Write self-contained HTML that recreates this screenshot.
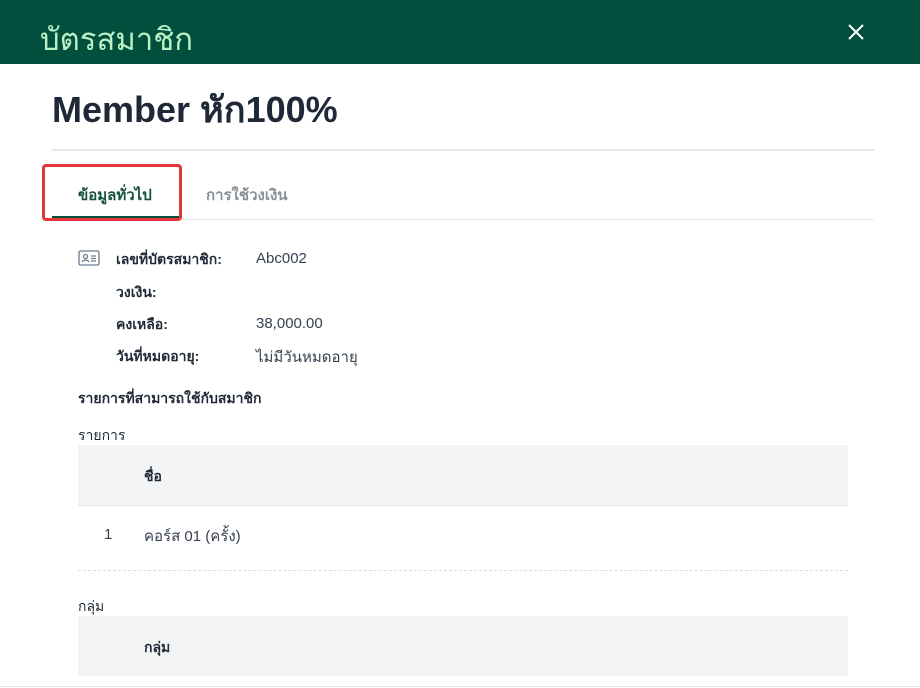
<!DOCTYPE html>
<html><head><meta charset="utf-8"><style>
body{margin:0;width:920px;height:688px;overflow:hidden;background:#fff;font-family:"Liberation Sans",sans-serif;color:#1f2937;position:relative}
.hdr{position:absolute;left:0;top:0;width:920px;height:64px;background:#024f3e}
.hdr .t{position:absolute;left:40px;top:14px;font-size:31px;color:#b9f0c4}
.hdr .x{position:absolute;left:846px;top:22px}
.a{position:absolute;white-space:nowrap}
h1{position:absolute;left:52px;top:81px;margin:0;font-size:36px;font-weight:700;color:#1e2836}
.line{position:absolute;height:1px;background:#e5e7eb}
.b{font-weight:700;font-size:14px;color:#1f2937}
.v{font-size:15px;color:#374151}
</style></head><body>
<div class="hdr"><div class="t">บัตรสมาชิก</div>
<svg class="x" width="20" height="20" viewBox="0 0 20 20"><path d="M3 3L17 17M17 3L3 17" stroke="#fff" stroke-width="2"/></svg></div>
<h1>Member หัก100%</h1>
<div class="line" style="left:52px;top:149px;width:822px;height:2px;background:#e5e7eb"></div>
<div class="line" style="left:52px;top:219px;width:822px"></div>
<div class="a" style="left:78px;top:183px;font-size:15px;font-weight:700;color:#14503f">ข้อมูลทั่วไป</div>
<div style="position:absolute;left:52px;top:216px;width:128px;height:3px;background:#024f3e"></div>
<div style="position:absolute;left:42px;top:164px;width:140px;height:57px;border:3px solid #e5373b;border-radius:4px;box-sizing:border-box"></div>
<div class="a" style="left:206px;top:183px;font-size:15px;font-weight:700;color:#8a9099">การใช้วงเงิน</div>
<svg style="position:absolute;left:78px;top:250px" width="22" height="16" viewBox="0 0 22 16"><rect x="1" y="1" width="20" height="14" rx="1.5" fill="none" stroke="#6b7a90" stroke-width="1.3"/><circle cx="7.5" cy="6.5" r="2" fill="none" stroke="#6b7a90" stroke-width="1.2"/><path d="M4 12c1-2.5 6-2.5 7 0M13 6h5M13 8.5h5M13 11h5" stroke="#6b7a90" stroke-width="1.2" fill="none"/></svg>
<div class="a b" style="left:116px;top:249px">เลขที่บัตรสมาชิก:</div><div class="a v" style="left:256px;top:250px">Abc002</div>
<div class="a b" style="left:116px;top:282px">วงเงิน:</div>
<div class="a b" style="left:116px;top:314px">คงเหลือ:</div><div class="a v" style="left:256px;top:315px">38,000.00</div>
<div class="a b" style="left:116px;top:346px">วันที่หมดอายุ:</div><div class="a v" style="left:256px;top:345px">ไม่มีวันหมดอายุ</div>
<div class="a b" style="left:78px;top:388px">รายการที่สามารถใช้กับสมาชิก</div>
<div class="a" style="left:78px;top:425px;font-size:14px">รายการ</div>
<div style="position:absolute;left:78px;top:445px;width:770px;height:60px;background:#f3f4f6"></div>
<div class="a b" style="left:144px;top:466px">ชื่อ</div>
<div class="line" style="left:78px;top:505px;width:770px"></div>
<div class="a v" style="left:104px;top:526px">1</div><div class="a v" style="left:144px;top:524px">คอร์ส 01 (ครั้ง)</div>
<div style="position:absolute;left:78px;top:570px;width:770px;border-top:1px dashed #d9dce1"></div>
<div class="a" style="left:78px;top:596px;font-size:14px">กลุ่ม</div>
<div style="position:absolute;left:78px;top:616px;width:770px;height:60px;background:#f3f4f6"></div>
<div class="a b" style="left:144px;top:637px">กลุ่ม</div>
<div class="line" style="left:0;top:686px;width:920px"></div>
</body></html>
